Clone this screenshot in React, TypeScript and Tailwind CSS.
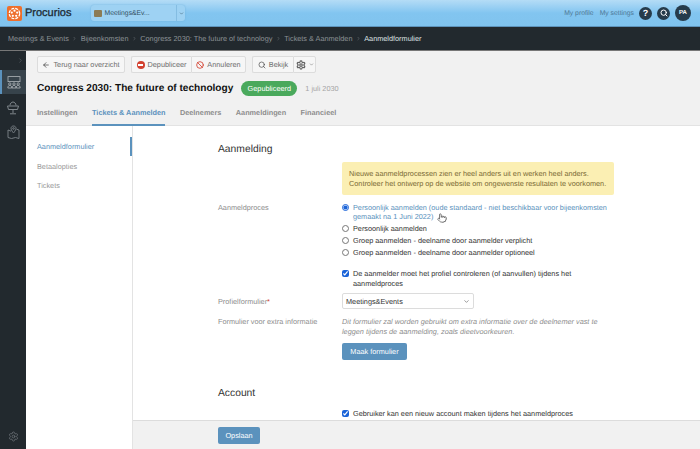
import { ArrowLeft, Ban, ChevronDown, ChevronRight, Search, Settings, Pointer } from "lucide-react";

const crumbs = ["Meetings & Events", "Bijeenkomsten", "Congress 2030: The future of technology", "Tickets & Aanmelden"];
const tabs = ["Instellingen", "Tickets & Aanmelden", "Deelnemers", "Aanmeldingen", "Financieel"];
const radios = [
  "Persoonlijk aanmelden",
  "Groep aanmelden - deelname door aanmelder verplicht",
  "Groep aanmelden - deelname door aanmelder optioneel",
];

function Logo() {
  return (
    <svg width="15" height="15" viewBox="0 0 15 15" className="shrink-0">
      <rect width="15" height="15" rx="2" fill="#ee6f2d" />
      <circle cx="7.5" cy="7.5" r="5.2" fill="none" stroke="#fff" strokeWidth="1.2" strokeDasharray="3 1.1" />
      <circle cx="7.5" cy="4.7" r="1.1" fill="#fff" />
      <circle cx="10.2" cy="6.6" r="1.1" fill="#fff" />
      <circle cx="9.2" cy="9.8" r="1.1" fill="#fff" />
      <circle cx="5.8" cy="9.8" r="1.1" fill="#fff" />
      <circle cx="4.8" cy="6.6" r="1.1" fill="#fff" />
    </svg>
  );
}

function AudienceIcon() {
  return (
    <svg width="14" height="13" viewBox="0 0 14 13" fill="none" stroke="#aeb4b8" strokeWidth="0.8">
      <rect x="1" y="0.6" width="12" height="5" />
      <circle cx="2.8" cy="8" r="1.2" />
      <circle cx="7" cy="8" r="1.2" />
      <circle cx="11.2" cy="8" r="1.2" />
      <path d="M0.8 12c0-1.800 1-2.600 2-2.600s2 .8 2 2.600zM5 12c0-1.800 1-2.600 2-2.600s2 .8 2 2.600zM9.200 12c0-1.800 1-2.600 2-2.600s2 .8 2 2.600z" />
    </svg>
  );
}

function DeskIcon() {
  return (
    <svg width="12" height="14" viewBox="0 0 12 14" fill="none" stroke="#7f868b" strokeWidth="1">
      <path d="M3 4.500C3 2.500 4.500 1 6 1s3 1.500 3 3.500" />
      <path d="M0.500 5h11L10.500 8.500h-9zM6 8.500V12M3 12.800h6" />
    </svg>
  );
}

function MapIcon() {
  return (
    <svg width="13" height="14" viewBox="0 0 13 14" fill="none" stroke="#7f868b" strokeWidth="0.9">
      <path d="M4 6.200L1 5v7.500l3.500 1 4-1 3.500 1V5l-2.500-.8" />
      <path d="M6.500 1C5 1 4 2.100 4 3.400 4 5 6.500 8 6.500 8S9 5 9 3.400C9 2.100 8 1 6.500 1z" />
      <circle cx="6.500" cy="3.500" r="0.800" />
    </svg>
  );
}

function Toolbtn({ children, className = "" }: { children: React.ReactNode; className?: string }) {
  return (
    <div className={`flex h-[17px] items-center justify-center gap-[3px] border border-[#dcdcdc] bg-[#f6f6f6] text-[#6d6d6d] ${className}`}>
      {children}
    </div>
  );
}

export default function App() {
  return (
    <div className="flex h-[449px] w-[700px] flex-col overflow-hidden bg-white text-[7.3px] leading-[9px] text-[#333] antialiased [text-rendering:geometricPrecision]" style={{ fontFamily: '"Liberation Sans", Arial, sans-serif' }}>
      {/* top bar */}
      <header className="flex h-[27px] shrink-0 items-center border-b border-[#5d93bb] bg-gradient-to-b from-[#b4dcf6] via-[#82c5f0] to-[#80c3ee] pl-[7px] pr-[9px]">
        <Logo />
        <span className="ml-[3px] text-[11px] text-[#1d2a33] [-webkit-text-stroke:0.3px_#1d2a33]">Procurios</span>
        <div className="ml-[20px] flex h-[16px] w-[94px] items-center rounded-[3px] bg-[#9ed2f3] pl-[3px] shadow-[0_0_2px_#6fb1dc]">
          <span className="h-[7px] w-[8px] shrink-0 rounded-[1px] bg-[#8c7b55]" />
          <span className="ml-[2px] flex-1 text-[6.800px] text-[#33505f]">Meetings&amp;Ev...</span>
          <span className="flex h-full w-[9px] items-center justify-center border-l border-[#84bde2]">
            <ChevronDown size={5} strokeWidth={3} color="#4a6d82" />
          </span>
        </div>
        <div className="ml-auto flex items-center">
          <span className="text-[6.800px] text-[#4f7895]">My profile</span>
          <span className="ml-[6px] text-[6.800px] text-[#4f7895]">My settings</span>
          <span className="ml-[5px] flex h-[13px] w-[13px] items-center justify-center rounded-full bg-[#263b4b] text-[9px] font-bold text-white">?</span>
          <span className="ml-[5px] flex h-[13px] w-[13px] items-center justify-center rounded-full bg-[#263b4b]">
            <Search size={8} strokeWidth={3} color="#fff" />
          </span>
          <span className="ml-[5px] flex h-[16px] w-[16px] items-center justify-center rounded-full bg-[#263b4b] text-[6px] font-bold text-white">PA</span>
        </div>
      </header>

      {/* breadcrumb */}
      <nav className="flex h-[24px] shrink-0 items-center border-b border-[#777] bg-[#22292e] pl-[8px] text-[#8b9195]">
        {crumbs.map((c) => (
          <span key={c} className="flex items-center">
            {c}
            <ChevronRight size={5} strokeWidth={2} className="mx-[3.400px]" />
          </span>
        ))}
        <span className="text-[#dfe2e4]">Aanmeldformulier</span>
      </nav>

      <div className="flex min-h-0 flex-1">
        {/* sidebar */}
        <aside className="flex w-[26px] shrink-0 flex-col items-center bg-[#22292e]">
          <div className="flex h-[19px] w-full items-center justify-end pr-[2px]">
            <ChevronRight size={7} color="#5f666b" />
          </div>
          <div className="flex h-[24px] w-full items-center justify-center border-l-2 border-[#5b92bd] bg-[#37434b]">
            <AudienceIcon />
          </div>
          <div className="mt-[4px] flex h-[19px] items-center"><DeskIcon /></div>
          <div className="mt-[5px] flex h-[19px] items-center"><MapIcon /></div>
          <Settings size={11} color="#71787d" strokeWidth={1.5} className="mb-[7px] mt-auto" />
        </aside>

        <div className="flex min-w-0 flex-1 flex-col">
          {/* page head */}
          <div className="h-[75px] shrink-0 border-b border-[#e3e3e3] bg-[#f1f1f1] pl-[11px]">
            <div className="flex pt-[5px]">
              <Toolbtn className="w-[88px] rounded-[2px]">
                <ArrowLeft size={8} strokeWidth={2} color="#333" />
                Terug naar overzicht
              </Toolbtn>
              <Toolbtn className="ml-[6px] w-[60px] rounded-l-[2px] border-r-0">
                <span className="flex h-[8px] w-[8px] items-center justify-center rounded-full bg-[#d2402f]"><span className="h-[2px] w-[5px] bg-white" /></span>
                Depubliceer
              </Toolbtn>
              <Toolbtn className="w-[55px] rounded-r-[2px]">
                <Ban size={8} strokeWidth={2.5} color="#d2402f" />
                Annuleren
              </Toolbtn>
              <Toolbtn className="ml-[6px] w-[41px] rounded-l-[2px] border-r-0">
                <Search size={8} strokeWidth={2} color="#444" />
                Bekijk
              </Toolbtn>
              <Toolbtn className="w-[23px] rounded-r-[2px]">
                <Settings size={10} strokeWidth={3} color="#666" />
                <ChevronDown size={5} strokeWidth={2.5} />
              </Toolbtn>
            </div>
            <div className="mt-[7px] flex h-[16px] items-center">
              <h1 className="text-[10.100px] font-bold text-[#111]">Congress 2030: The future of technology</h1>
              <span className="ml-[8px] flex h-[15px] w-[56px] items-center justify-center rounded-full bg-[#4aa95c] text-white">Gepubliceerd</span>
              <span className="ml-[8px] text-[#a5a5a5]">1 juli 2030</span>
            </div>
            <div className="mt-[5px] flex h-[25px]">
              {tabs.map((t, i) => (
                <span key={t} className={`mr-[14.500px] flex items-center font-bold ${i === 1 ? "border-b-2 border-[#5b92bd] text-[#5b92bd]" : "border-b-2 border-transparent text-[#8d8d8d]"}`}>{t}</span>
              ))}
            </div>
          </div>

          <div className="flex min-h-0 flex-1">
            {/* sub nav */}
            <div className="w-[107px] shrink-0 border-r border-[#e3e3e3] pt-[11px]">
              <div className="flex h-[19px] items-center justify-between text-[#5b92bd]">
                <span className="pl-[11px]">Aanmeldformulier</span>
                <span className="h-[19px] w-[2px] bg-[#5b92bd]" />
              </div>
              <div className="flex h-[20px] items-center pl-[11px] text-[#999]">Betaalopties</div>
              <div className="flex h-[19px] items-center pl-[11px] text-[#999]">Tickets</div>
            </div>

            <div className="flex min-w-0 flex-1 flex-col">
              {/* form */}
              <div className="relative min-h-0 flex-1 overflow-hidden pl-[85px] pr-[86px]">
                <h2 className="pt-[17px] text-[10.300px] leading-[13px] text-[#333]">Aanmelding</h2>
                <div className="ml-[124px] mt-[6px] rounded-[2px] bg-[#fbefb3] px-[7px] py-[6.500px] leading-[10px] text-[#7a6a35]">
                  Nieuwe aanmeldprocessen zien er heel anders uit en werken heel anders.
                  <br />
                  Controleer het ontwerp op de website om ongewenste resultaten te voorkomen.
                </div>

                <div className="mt-[7.500px] grid grid-cols-[124px_1fr] leading-[9.500px]">
                  <div className="text-[#8d8d8d]">Aanmeldproces</div>
                  <div>
                    <label className="flex items-start gap-[4px] text-[#5b92bd]">
                      <input type="radio" name="proces" defaultChecked className="mt-[1px] h-[7px] w-[7px] shrink-0 accent-[#1a63d8]" />
                      <span>Persoonlijk aanmelden (oude standaard - niet beschikbaar voor bijeenkomsten<br />gemaakt na 1 Juni 2022)</span>
                    </label>
                    {radios.map((r) => (
                      <label key={r} className="mt-[2.500px] flex items-start gap-[4px] text-[#333]">
                        <input type="radio" name="proces" className="mt-[1px] h-[7px] w-[7px] shrink-0" />
                        <span>{r}</span>
                      </label>
                    ))}
                    <label className="mt-[11.500px] flex items-start gap-[4px] text-[#333]">
                      <input type="checkbox" defaultChecked className="mt-[1px] h-[7px] w-[7px] shrink-0 accent-[#1a63d8]" />
                      <span>De aanmelder moet het profiel controleren (of aanvullen) tijdens het<br />aanmeldproces</span>
                    </label>
                  </div>
                </div>

                <div className="mt-[5px] grid grid-cols-[124px_1fr] items-center">
                  <div className="text-[#8d8d8d]">Profielformulier<span className="text-[#d2402f]">*</span></div>
                  <div className="flex h-[16px] w-[132px] items-center justify-between rounded-[2px] border border-[#dcdcdc] bg-white px-[3px] text-[#333]">
                    Meetings&amp;Events
                    <ChevronDown size={7} strokeWidth={2} color="#555" />
                  </div>
                </div>

                <div className="mt-[8px] grid grid-cols-[124px_1fr] leading-[10px]">
                  <div className="text-[#8d8d8d]">Formulier voor extra informatie</div>
                  <div>
                    <p className="italic text-[#8d8d8d]">
                      Dit formulier zal worden gebruikt om extra informatie over de deelnemer vast te<br />
                      leggen tijdens de aanmelding, zoals dieetvoorkeuren.
                    </p>
                    <div className="mt-[6px] flex h-[17px] w-[65px] items-center justify-center rounded-[2px] bg-[#5b92bd] text-white">Maak formulier</div>
                  </div>
                </div>

                <h2 className="mt-[27px] text-[10.300px] leading-[13px] text-[#333]">Account</h2>
                <div className="ml-[124px] mt-[9px]">
                  <label className="flex items-start gap-[4px] leading-[9.500px] text-[#333]">
                    <input type="checkbox" defaultChecked className="mt-[1px] h-[7px] w-[7px] shrink-0 accent-[#1a63d8]" />
                    <span>Gebruiker kan een nieuw account maken tijdens het aanmeldproces</span>
                  </label>
                </div>

                {/* mouse pointer from the capture */}
                <Pointer size={10} strokeWidth={1.5} color="#333" fill="#fff" className="absolute left-[304px] top-[87px]" />
              </div>

              {/* footer */}
              <div className="flex h-[29px] shrink-0 items-center border-t border-[#dcdcdc] bg-[#f1f1f1] pl-[85px]">
                <div className="flex h-[17px] w-[42px] items-center justify-center rounded-[2px] bg-[#5b92bd] text-white">Opslaan</div>
              </div>
            </div>
          </div>
        </div>
      </div>
    </div>
  );
}
